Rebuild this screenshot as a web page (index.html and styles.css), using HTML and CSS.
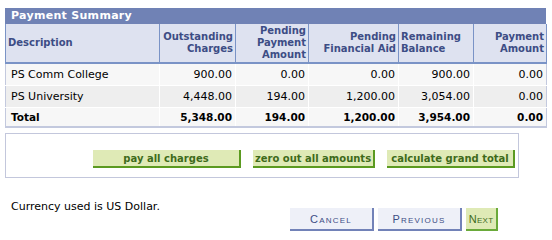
FILE: index.html
```html
<!DOCTYPE html>
<html>
<head>
<meta charset="utf-8">
<link rel="stylesheet" href="styles.css">
</head>
<body>
<div class="page">
  <div class="grid">
    <div class="title">Payment Summary</div>
    <table class="summary">
      <colgroup>
        <col class="c1"><col class="c2"><col class="c3"><col class="c4"><col class="c5"><col class="c6">
      </colgroup>
      <thead>
        <tr>
          <th class="left">Description</th>
          <th>Outstanding<br>Charges</th>
          <th>Pending<br>Payment<br>Amount</th>
          <th>Pending<br>Financial Aid</th>
          <th class="left">Remaining<br>Balance</th>
          <th>Payment<br>Amount</th>
        </tr>
      </thead>
      <tbody>
        <tr class="odd">
          <td class="left">PS Comm College</td><td>900.00</td><td>0.00</td><td>0.00</td><td>900.00</td><td>0.00</td>
        </tr>
        <tr class="even">
          <td class="left">PS University</td><td>4,448.00</td><td>194.00</td><td>1,200.00</td><td>3,054.00</td><td>0.00</td>
        </tr>
        <tr class="total">
          <td class="left">Total</td><td>5,348.00</td><td>194.00</td><td>1,200.00</td><td>3,954.00</td><td>0.00</td>
        </tr>
      </tbody>
    </table>
  </div>
  <div class="actions">
    <button class="gbtn w1">pay all charges</button>
    <button class="gbtn w2">zero out all amounts</button>
    <button class="gbtn w3">calculate grand total</button>
  </div>
  <div class="footer">
    <div class="currency">Currency used is US Dollar.</div>
    <div class="nav">
      <button class="nbtn wc">Cancel</button>
      <button class="nbtn wp">Previous</button>
      <button class="nbtn next">Next</button>
    </div>
  </div>
</div>
</body>
</html>
```
FILE: styles.css
```css
html, body { margin: 0; padding: 0; background: #ffffff; }
.page {
  padding: 8px 0 0 5px;
  width: 541px;
  font-family: "DejaVu Sans", Verdana, sans-serif;
}
.title {
  background: #7082b5;
  color: #ffffff;
  font-weight: bold;
  font-size: 11px;
  height: 16px;
  line-height: 16px;
  padding-left: 6px;
  letter-spacing: 0.3px;
}
.summary {
  width: 541px;
  border-collapse: collapse;
  table-layout: fixed;
  font-size: 11px;
  border-left: 1px solid #c3c9de;
  border-right: 1px solid #c3c9de;
  border-bottom: 2px solid #c3c9de;
}
.c1 { width: 154px; }
.c2 { width: 76px; }
.c3 { width: 73px; }
.c4 { width: 90px; }
.c5 { width: 75px; }
.c6 { width: 73px; }
.summary th {
  background: #dee2f0;
  color: #3d4d85;
  font-weight: bold;
  font-size: 10px;
  line-height: 12px;
  height: 38px;
  padding: 0 2px;
  text-align: right;
  vertical-align: middle;
  border-left: 1px solid #7a93c6;
  border-bottom: 2px solid #7a93c6;
}
.summary th:last-child { border-right: 1px solid #7a93c6; }
.summary th.left { text-align: left; }
.summary td {
  text-align: right;
  padding: 0 3px;
  height: 21px;
  color: #000000;
  border-left: 1px solid #ffffff;
  border-bottom: 1px solid #ffffff;
  white-space: nowrap;
}
.summary td.left { text-align: left; padding-left: 5px; }
.summary td:first-child { border-left: none; }
.odd td { background: #f7f7f7; }
.even td { background: #eeeeee; }
.total td { background: #f7f7f7; font-weight: bold; font-size: 10.5px; height: 18px; border-bottom: none; }
.actions {
  margin-top: 5px;
  border: 1px solid #c3c7dc;
  display: flex;
  justify-content: flex-end;
  align-items: flex-start;
  gap: 12px;
  padding: 16px 3px 0 0;
  box-sizing: border-box;
  width: 514px;
  height: 45px;
}
.gbtn {
  font-family: "DejaVu Sans", Verdana, sans-serif;
  font-weight: bold;
  font-size: 10px;
  color: #3e6a1b;
  background: #dfeab6;
  border: none;
  border-right: 2px solid #5b9a20;
  border-bottom: 2px solid #5b9a20;
  height: 18px;
  padding: 0;
  line-height: 15px;
  margin: 0;
  white-space: nowrap;
}
.w1 { width: 148px; }
.w2 { width: 122px; }
.w3 { width: 128px; }
.footer {
  display: flex;
  align-items: flex-start;
  margin-top: 22px;
}
.currency {
  font-size: 11px;
  padding-left: 6px;
  width: 279px;
  color: #000000;
}
.nav { display: flex; gap: 4px; margin-top: 8px; }
.nbtn {
  font-family: "Liberation Sans", Arial, sans-serif;
  font-variant: small-caps;
  font-size: 11px;
  letter-spacing: 1.2px;
  color: #3d4d85;
  background: #eef0f8;
  border: none;
  border-right: 2px solid #7282b8;
  border-bottom: 2px solid #7282b8;
  height: 23px;
  padding: 0;
  margin: 0;
  white-space: nowrap;
}
.wc { width: 84px; }
.wp { width: 84px; }
.next {
  width: 32px;
  background: #dfeab6;
  color: #3e6a1b;
  border-right-color: #6aaa3a;
  border-bottom-color: #6aaa3a;
  letter-spacing: 0.3px;
}
```
